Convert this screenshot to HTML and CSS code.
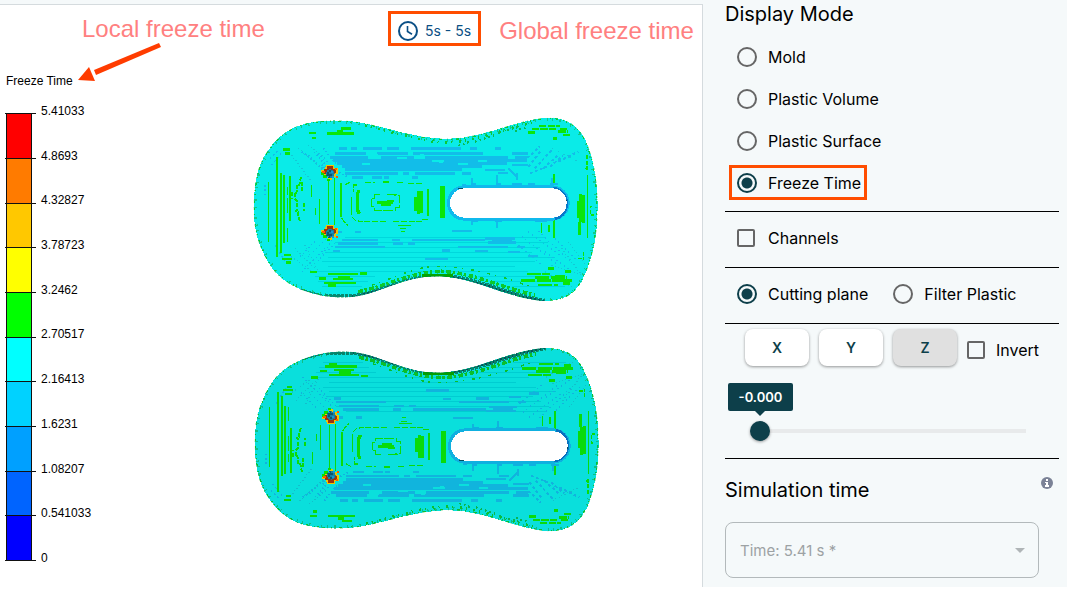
FILE: index.html
```html
<!DOCTYPE html>
<html lang="en">
<head>
  <meta charset="UTF-8">
  <meta name="viewport" content="width=device-width, initial-scale=1.0">
  <title>Freeze Time</title>
  <link rel="stylesheet" href="styles.css">
</head>
<body>
  <div class="app">

    <!-- 3D viewer -->
    <main class="viewer">
      <div class="viewer-top">
        <span class="note note-local">Local freeze time</span>
        <div class="time-chip">
          <svg width="20" height="20" viewBox="0 0 20 20" fill="none" stroke="#0b4f85" stroke-width="2">
            <circle cx="10" cy="10" r="9"/>
            <path d="M9.5 5v5.5l4.500 2.800" stroke-width="1.600"/>
          </svg>
          <span>5s - 5s</span>
        </div>
        <span class="note note-global">Global freeze time</span>
      </div>

      <svg class="arrow" width="84" height="40" viewBox="0 0 84 40">
        <path d="M81 0l2 4L18 32l-2-5z" fill="#ff3c00"/>
        <path d="M0 37L11 24l6 14z" fill="#ff3c00"/>
      </svg>

      <div class="viewer-body">
        <div class="legend">
          <div class="legend-title">Freeze Time</div>
          <svg width="100" height="464" viewBox="0 0 100 464">
            <g shape-rendering="crispEdges">
              <rect x="6" y="9" width="25" height="45" fill="#f00"/>
              <rect x="6" y="54" width="25" height="45" fill="#ff7b00"/>
              <rect x="6" y="99" width="25" height="44" fill="#ffc800"/>
              <rect x="6" y="143" width="25" height="45" fill="#ff0"/>
              <rect x="6" y="188" width="25" height="45" fill="#0f0"/>
              <rect x="6" y="233" width="25" height="44" fill="#0ff"/>
              <rect x="6" y="277" width="25" height="45" fill="#00d2ff"/>
              <rect x="6" y="322" width="25" height="45" fill="#00a0ff"/>
              <rect x="6" y="367" width="25" height="44" fill="#0064ff"/>
              <rect x="6" y="411" width="25" height="45" fill="#00f"/>
              <path d="M5 9h31M5 54h31M5 99h31M5 143h31M5 188h31M5 233h31M5 277h31M5 322h31M5 367h31M5 411h31M5 456h31M6 9v447M31 9v447" stroke="#111" stroke-width="1"/>
            </g>
            <g class="legend-values">
              <text x="41" y="11">5.41033</text>
              <text x="41" y="56">4.8693</text>
              <text x="41" y="100">4.32827</text>
              <text x="41" y="145">3.78723</text>
              <text x="41" y="190">3.2462</text>
              <text x="41" y="234">2.70517</text>
              <text x="41" y="279">2.16413</text>
              <text x="41" y="324">1.6231</text>
              <text x="41" y="369">1.08207</text>
              <text x="41" y="413">0.541033</text>
              <text x="41" y="458">0</text>
            </g>
          </svg>
        </div>

        <svg class="model" width="365" height="440" viewBox="0 0 1095 1320">
          <defs>
            <path id="outline" d="M26 310C27 240 35 190 60 150C90 100 130 68 180 56C230 44 300 44 350 53C430 68 510 100 600 102C710 102 800 50 890 40C960 30 1005 62 1028 120C1050 180 1058 240 1058 300C1058 390 1045 460 1010 530C980 583 930 594 870 585C760 568 690 520 590 514C480 508 410 566 320 576C220 583 130 550 85 495C45 440 26 380 26 310Z"/>
            <clipPath id="inside"><use href="#outline"/></clipPath>
            <!-- pin hole with its hot ring -->
            <g id="pin">
              <path d="M-12-24h24v9h12v18h-6v9h-12v9h-12v-9h-12v-9h-9v-12h9z" fill="#f2c400"/>
              <path d="M-18-12h9v-9h18v9h9v12h-9v12h-21v-9h-6z" fill="#9a3210"/>
              <path d="M-27-3h9v9h9v9h-12v-9h-6zM-9 18h9v6h-9z" fill="#0ae000"/>
              <path d="M15-15h6v6h-6zM-24-6h9v6h-9zM18 9h6v6h-6z" fill="#ff5a00"/>
              <circle cy="2" r="13" fill="#1c7f9e"/>
              <path d="M-9-3h6v-6h6v6h-6v6h9v6h-6v6h-6v-6h-6z" fill="#0a5570"/>
              <path d="M3-6h6v6h-6zM6 9h6v6h-6zM-9 9h6v3h-6z" fill="#1398d8"/>
            </g>
            <g id="plate">
              <use href="#outline" fill="#0aebe8"/>
              <g clip-path="url(#inside)" fill="none">
                <!-- layer lines -->
                <path d="M300 398h600M270 413h640M285 428h600M240 443h620M250 458h680M230 470h640M250 485h560M210 500h640M210 515h180M700 515h240M220 530h150M740 530h220M230 545h120M800 545h160" stroke="#00d8dc" stroke-width="3"/>

                <!-- cooler streaks -->
                <g stroke="#12bde9">
                  <path d="M282 131h24M318 131h18M354 131h56M426 131h36M498 131h150M675 131h21M750 131h18" stroke-width="9"/>
                  <path d="M270 146h92M396 146h92M504 146h210M800 146h50M255 156h114M408 156h100M540 156h250M810 156h36" stroke-width="9"/>
                  <path d="M265 167h580M276 176h510M290 185h420M300 192h350" stroke-width="10"/>
                  <path d="M300 205h160M474 205h18M510 205h120M650 205h27M320 217h35M380 217h30M418 217h15M500 217h20M720 195h60M760 204h30M800 180h48" stroke-width="7"/>
                  <path d="M290 404h110M440 404h24M500 404h150M610 404h110M740 404h60M280 415h120M445 415h28M490 415h20M730 412h84" stroke-width="7"/>
                  <path d="M270 426h150M640 426h150M815 426h24M265 437h20M540 461h70M690 437h40M790 441h36M590 436h24M850 452h30M260 380h30M330 380h18M620 378h60M720 400h90" stroke-width="7"/>
                  <path d="M220 145l30 28M235 130l40 48M190 150l60 60M208 140l54 65M230 180l40 20M255 185l50 30M170 140l70 54" stroke-width="6" stroke-dasharray="4 7"/>
                  <path d="M250 395l-60 60M260 405l-45 70M270 415l-50 50M210 410l-50 50M240 430l-70 70" stroke-width="4" stroke-dasharray="3 9"/>
                  <path d="M850 185l40-50M870 190l50-55M895 190l45-40M915 185l40-34M835 170l50-46M940 170l60-30M855 205l50-20" stroke-width="6" stroke-dasharray="9 7"/>
                  <path d="M850 380l100 75M830 395l110 85M880 378l95 90M820 420l70 60M900 440l80 60M930 400l70 70" stroke-width="4" stroke-dasharray="4 10"/>
                  <path d="M682 218v24M757 210v32M815 205v20M922 218v24M682 345v15M757 345v24M790 190l25 25" stroke-width="6"/>
                  <path d="M80 180l30-36M90 420l30 50M60 240v30M75 160l24-22" stroke-width="4" stroke-dasharray="5 8"/>
                </g>
                <!-- gaps in the wide streak -->
                <path d="M350 178h24M560 167h36M581 170h14M455 160h30M640 178h30M700 168h26M525 150h12M390 150h10" stroke="#0aebe8" stroke-width="6"/>
                <path d="M160 130l70 60M140 150l60 80M190 120l50 40M130 450l80 55M150 430l60 60M180 420l40 80M920 130l80 40M920 480l90 30M950 430l60 80M970 410l50 70M900 500l80 45" stroke="#13c9d6" stroke-width="4" stroke-dasharray="3 7"/>

                <!-- warmer bands -->
                <g stroke="#0ae60a">
                  <path d="M95 155v302M107 205v238M117 210v204M134 212v135M127 245v24M127 280v45M127 370v40" stroke-width="5"/>
                  <path d="M71 230v180M250 228v128M268 220v140M288 235v102M320 276v55M223 282v76M211 310v20M200 240v36" stroke-width="4"/>
                  <path d="M168 215l-6 30M157 240v18l-9 12M150 265v16l12 12M157 295v20l-8 4M158 320l6 28M140 262v20M177 295v22M172 230v30" stroke-width="6" stroke-dasharray="12 4"/>
                  <path d="M343 255l-5 10v50l5 12M520 257v70M528 257v66M513 275v44M591 242v96M596 242v96" stroke-width="10"/>
                  <path d="M549 252v80" stroke-width="4"/>
                  <path d="M396 292h48M408 298h30M426 288h20" stroke-width="8"/>
                  <path d="M400 268h-12v12h-9v24h9v12h64v-9h12v-36h-18M390 268h14M425 268h30" stroke-width="4" stroke-dasharray="30 5"/>
                  <path d="M340 344v5h86M445 349h85v-6h20M335 240h-10v20M320 335l12 12M290 340l18 22M300 240l20-10M360 232h30M415 231h20M455 232h20M490 236h40" stroke-width="4" stroke-dasharray="18 5"/>
                  <path d="M288 70h30M246 85h80M275 77h18M192 84h22M200 98h12M115 133h20M120 145h15M300 85h18" stroke-width="7"/>
                  <path d="M250 507h90M222 520h22M265 522h60M236 533h97M250 541h24M118 450h20M112 462h28M124 472h15M195 500h20M345 505h20M280 515h36" stroke-width="7"/>
                  <path d="M882 63h64M860 72h72M940 80h30M955 90h20M850 83h20M925 100h10M945 72h24" stroke-width="8" stroke-dasharray="22 4"/>
                  <path d="M845 507h70M870 517h95M828 526h110M880 540h60M910 490h18M960 500h18M940 526h42M930 515h30M955 535h20" stroke-width="8" stroke-dasharray="42 5"/>
                  <path d="M1006 267v84M1014 270v84M999 288v52M1002 350v40" stroke-width="9"/>
                  <path d="M1027 210v190M927 208v30M890 355v28M912 360v20M927 345v54" stroke-width="4"/>
                  <path d="M1042 304h-6v26h12M1026 150v48M1020 190h10M1000 460h16M1015 440v24" stroke-width="5" stroke-dasharray="12 5"/>
                  <path d="M460 362h38M465 369h18M468 380h12" stroke-width="3"/>
                </g>
                <!-- rim speckle -->
                <use href="#outline" stroke="#0cc936" stroke-width="8" stroke-dasharray="4 11 9 16 3 8"/>
                <use href="#outline" stroke="#10c98a" stroke-width="18" stroke-dasharray="3 19 5 33 3 14"/>
                <path d="M360 62C440 78 520 110 600 112C700 112 790 65 870 52" stroke="#0cc936" stroke-width="8" stroke-dasharray="6 12 3 20"/>
                <path d="M640 122l40-14M690 110l60-20M760 84l60-18M810 78l36-12" stroke="#09bd56" stroke-width="6" stroke-dasharray="5 9"/>
                <path d="M340 560C440 540 500 500 590 499C690 503 780 553 870 570" stroke="#0bc92c" stroke-width="11" stroke-dasharray="14 5 7 8"/>
                <path d="M380 540C450 520 500 484 590 484C700 490 790 522 860 546" stroke="#0bc92c" stroke-width="5" stroke-dasharray="9 14 4 24"/>
                <path d="M240 574h80C420 562 480 512 590 512C690 516 780 568 900 588" stroke="#078a70" stroke-width="12" stroke-dasharray="9 3"/>
                <path d="M320 574C420 562 480 514 590 514C690 518 780 570 900 588" stroke="#04545e" stroke-width="6" stroke-dasharray="5 7"/>
                <path d="M530 511h95" stroke="#04a404" stroke-width="10"/>
                <path d="M130 545l110 28h70" stroke="#078a70" stroke-width="5" stroke-dasharray="12 4"/>
              </g>
              <!-- slot edge -->
              <rect x="606" y="241" width="368" height="106" rx="52" fill="#10b9ec"/>
              <path d="M650 240h12M678 238h15M752 238h15M800 238h30M850 238h20M915 238h24M680 349h20M750 349h20M870 349h36" stroke="#10b9ec" stroke-width="6"/>
              <path d="M925 250c50 5 54 80 5 91" fill="none" stroke="#0878c9" stroke-width="9"/>
              <path d="M640 250h150l130 3c24 2 40 18 44 38" fill="none" stroke="#044e60" stroke-width="4"/>
            </g>
            <rect id="slot" x="615" y="250" width="350" height="88" rx="44" fill="#fff"/>
          </defs>
          <use href="#plate"/>
          <use href="#slot"/>
          <use href="#pin" x="256" y="204"/>
          <use href="#pin" x="256" y="383"/>
          <g transform="translate(3 1317) scale(1 -1)">
            <use class="plate-back" href="#plate"/>
            <use href="#slot"/>
            <use href="#pin" x="256" y="204"/>
            <use href="#pin" x="256" y="383"/>
          </g>
        </svg>
      </div>
    </main>

    <!-- Settings panel -->
    <aside class="panel">
      <h2 class="panel-title">Display Mode</h2>
      <div class="option-list">
        <label class="option"><input type="radio" name="mode">Mold</label>
        <label class="option"><input type="radio" name="mode">Plastic Volume</label>
        <label class="option"><input type="radio" name="mode">Plastic Surface</label>
        <label class="option option-marked"><input type="radio" name="mode" checked>Freeze Time</label>
      </div>

      <hr>
      <div class="option-row">
        <label class="option"><input type="checkbox">Channels</label>
      </div>

      <hr>
      <div class="option-row">
        <label class="option"><input type="radio" name="tool" checked>Cutting plane</label>
        <label class="option"><input type="radio" name="tool">Filter Plastic</label>
      </div>

      <hr>
      <div class="axis-row">
        <button type="button" class="axis-btn">X</button>
        <button type="button" class="axis-btn">Y</button>
        <button type="button" class="axis-btn active">Z</button>
        <label class="option option-invert"><input type="checkbox">Invert</label>
      </div>

      <div class="slider">
        <output class="slider-value" for="plane">-0.000</output>
        <input type="range" id="plane" min="0" max="100" value="0" aria-label="Plane position">
      </div>

      <hr>
      <div class="sim-head">
        <h2 class="panel-title">Simulation time</h2>
        <svg class="info" width="12" height="12" viewBox="0 0 12 12">
          <circle cx="6" cy="6" r="6" fill="#7b8296"/>
          <path d="M5 2h2v2H5zM4 5h3v3h1v2H4V8h1V6H4z" fill="#fff"/>
        </svg>
      </div>
      <div class="select-wrap">
        <select class="time-select" aria-label="Time" disabled>
          <option>Time: 5.41 s *</option>
        </select>
        <svg class="caret" width="10" height="5" viewBox="0 0 10 5"><path d="M0 0h10L5 5z" fill="#b0b5b7"/></svg>
      </div>
    </aside>

  </div>
</body>
</html>
```
FILE: styles.css
```css
* {
  box-sizing: border-box;
}

body {
  margin: 0;
  background-color: #fff;
  color: #000;
  font-family: Inter, "Liberation Sans", sans-serif;
  font-size: 16px;
}

.app {
  display: flex;
  background-color: #f5f9fa;
}

/* Viewer */
.viewer {
  position: relative;
  flex: 1;
  min-width: 0;
  margin-top: 4px;
  background-color: #fff;
  border-top: 1px solid #d5dbde;
  border-right: 1px solid #d5dbde;
}

.viewer-top {
  display: flex;
  align-items: center;
  padding: 6px 0 0 82px;
  white-space: nowrap;
}

.note {
  font-family: "Liberation Sans", Arial, sans-serif;
  font-size: 24px;
  color: #ff8080;
}

.note-local {
  width: 306px;
}

.note-global {
  padding-top: 5px;
}

.time-chip {
  display: flex;
  align-items: center;
  gap: 7px;
  height: 35px;
  margin-right: 18px;
  padding: 4px 7px 0;
  border: 3px solid #ff4d00;
  font-size: 14px;
  color: #0b4f85;
}

.arrow {
  position: absolute;
  left: 78px;
  top: 38px;
}

.viewer-body {
  display: flex;
  align-items: flex-start;
  gap: 145px;
  padding-top: 26px;
}

.legend {
  font-family: "Liberation Sans", Arial, sans-serif;
  font-size: 12px;
}

.legend-title {
  height: 32px;
  padding-left: 6px;
  line-height: 18px;
}

.legend svg,
.model {
  display: block;
}

.legend-values {
  font-size: 12px;
}

.model {
  flex: none;
  margin-top: 33px;
  shape-rendering: crispEdges;
}

.plate-back {
  filter: brightness(0.95);
}

/* Panel */
.panel {
  width: 364px;
  padding: 0 8px 9px 22px;
}

.panel-title {
  margin: 0;
  font-size: 20px;
  font-weight: 400;
  line-height: 29px;
}

.option-list {
  display: flex;
  flex-direction: column;
  align-items: flex-start;
  gap: 7px;
  margin-top: 10px;
}

.option {
  display: inline-flex;
  align-items: center;
  gap: 11px;
  height: 35px;
  margin-left: 4px;
  padding: 0 3px 0 5px;
  border: 3px solid transparent;
  white-space: nowrap;
}

.option-marked {
  border-color: #ff4d00;
}

.option input {
  appearance: none;
  flex: none;
  margin: 0;
  border: 2px solid #666;
}

.option input[type="radio"] {
  width: 20px;
  height: 20px;
  border-radius: 50%;
}

.option input[type="radio"]:checked {
  border-color: #0d3f4a;
  background: radial-gradient(circle, #0d3f4a 5px, transparent 6px);
}

.option input[type="checkbox"] {
  width: 18px;
  height: 18px;
  margin-right: 2px;
  border-radius: 2px;
}

hr {
  height: 1px;
  margin: 11px 0 5px;
  border: none;
  background-color: #000;
}

.option-row {
  display: flex;
  align-items: center;
  gap: 7px;
  height: 42px;
}

.option-row + hr {
  margin-top: 8px;
}

.axis-row {
  display: flex;
  align-items: center;
  gap: 10px;
  padding-left: 20px;
}

.axis-btn {
  width: 64px;
  height: 37px;
  border: none;
  border-radius: 8px;
  background-color: #fff;
  box-shadow: 0 1px 3px rgba(0, 0, 0, 0.4);
  color: #0d3f4a;
  font-family: inherit;
  font-size: 14px;
  font-weight: 600;
}

.axis-btn.active {
  background-color: #e0e0e0;
}

.option-invert {
  gap: 9px;
  height: 37px;
  margin-left: 0;
  padding: 5px 0 0;
  border: none;
}

.slider {
  position: relative;
  margin: 0 33px 0 25px;
  padding-top: 55px;
}

.slider input {
  display: block;
  appearance: none;
  width: 100%;
  height: 20px;
  margin: 0 0 17px;
  background: linear-gradient(#e8eaeb, #e8eaeb) center / 100% 4px no-repeat;
}

.slider input::-webkit-slider-thumb {
  appearance: none;
  width: 20px;
  height: 20px;
  border-radius: 50%;
  background-color: #0d3f4a;
  box-shadow: 0 1px 3px rgba(0, 0, 0, 0.4);
}

.slider-value {
  position: absolute;
  top: 17px;
  left: -22px;
  width: 65px;
  border-radius: 2px;
  background-color: #0d3f4a;
  color: #fff;
  font-size: 13px;
  font-weight: 600;
  line-height: 28px;
  text-align: center;
}

.slider-value::after {
  content: "";
  position: absolute;
  top: 28px;
  left: 27px;
  border: 5px solid transparent;
  border-top-color: #0d3f4a;
}

.slider + hr {
  margin-top: 0;
}

.sim-head {
  display: flex;
  justify-content: space-between;
  padding: 12px 6px 17px 0;
}

.info {
  margin-top: 1px;
}

.select-wrap {
  position: relative;
  margin-right: 20px;
}

.time-select {
  display: block;
  appearance: none;
  width: 100%;
  height: 56px;
  padding: 0 14px;
  border: 1px solid #b3b9bb;
  border-radius: 8px;
  background-color: transparent;
  color: #9da2a4;
  font-family: inherit;
  font-size: 15px;
  opacity: 1;
}

.caret {
  position: absolute;
  right: 14px;
  top: 26px;
}
```
